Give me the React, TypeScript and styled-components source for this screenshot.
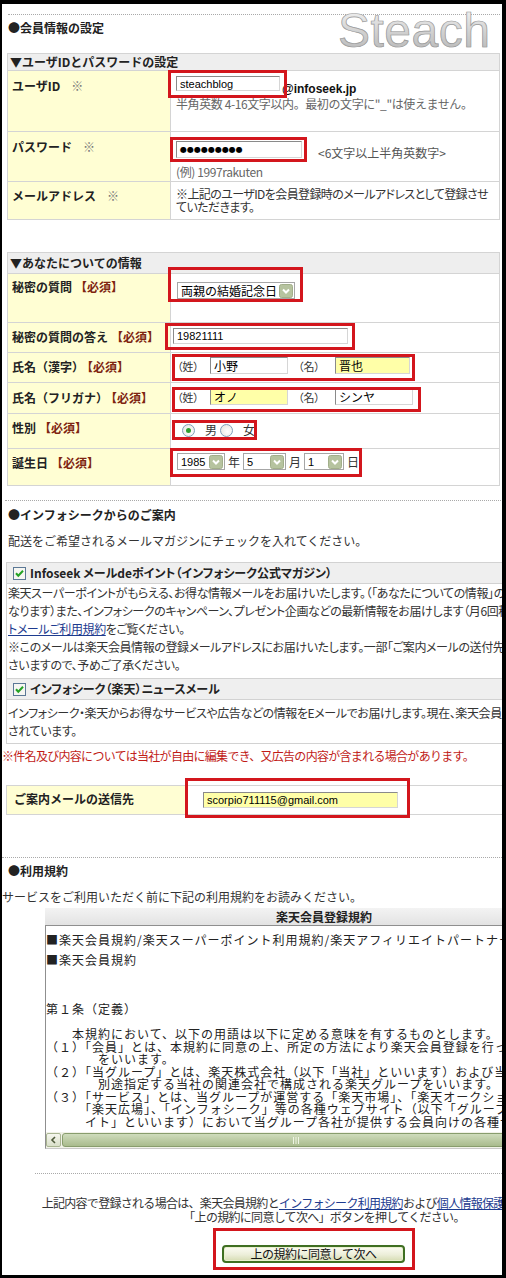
import React from "react";
import styled, { createGlobalStyle } from "styled-components";

const JP = `"Noto Sans CJK JP", "Noto Sans", sans-serif`;
const LATIN = `"Liberation Sans", "Noto Sans CJK JP", sans-serif`;

const GlobalStyle = createGlobalStyle`
  html, body { margin: 0; padding: 0; background: #000; }
  body { font-family: ${JP}; font-size: 12px; color: #333; }
  *, *::before, *::after { box-sizing: border-box; }
`;

const Frame = styled.div`
  position: relative;
  width: 506px;
  height: 1278px;
  border-style: solid;
  border-color: #000;
  border-width: 4px 4px 3px 2px;
  background: #fff;
  overflow: hidden;
`;

const Page = styled.div`
  width: 644px;
`;

const Watermark = styled.div`
  position: absolute;
  top: 3px;
  left: 336px;
  font-family: ${LATIN};
  font-size: 48px;
  line-height: 48px;
  letter-spacing: 0.5px;
  color: transparent;
  background: linear-gradient(#f4f4f4, #cfcfcf 55%, #b4b4b4);
  -webkit-background-clip: text;
  background-clip: text;
  -webkit-text-stroke: 0.7px #9b9b9b;
  pointer-events: none;
`;

const Rule = styled.div<{ $top: number; $left: number; $width: number }>`
  margin: ${(p) => p.$top}px 0 0 ${(p) => p.$left}px;
  width: ${(p) => p.$width}px;
  border-top: 1px dotted #a9a9a9;
`;

const Heading = styled.div<{ $top: number }>`
  margin: ${(p) => p.$top}px 0 0 6px;
  font-weight: bold;
  line-height: 14px;
  color: #222;
`;

const Note = styled.div<{ $top: number; $left: number }>`
  margin: ${(p) => p.$top}px 0 0 ${(p) => p.$left}px;
  line-height: 14px;
  color: #333;
  white-space: nowrap;
`;

/* form tables */
const FormTable = styled.div<{ $top: number; $left: number; $width: number }>`
  margin: ${(p) => p.$top}px 0 0 ${(p) => p.$left}px;
  width: ${(p) => p.$width}px;
  display: flex;
  flex-direction: column;
  gap: 1px;
  border: 1px solid #d4d4d4;
  background: #d4d4d4;
`;

const TableHead = styled.div<{ $h: number }>`
  height: ${(p) => p.$h}px;
  display: flex;
  align-items: center;
  padding-left: 2px;
  background: #eeeeee;
  font-weight: bold;
  line-height: 14px;
  color: #222;
`;

const Row = styled.div<{ $h: number; $label?: number }>`
  display: grid;
  grid-template-columns: ${(p) => p.$label ?? 162}px minmax(0, 1fr);
  gap: 1px;
  height: ${(p) => p.$h}px;
`;

const Label = styled.div<{ $pad: number; $left?: number }>`
  background: #fffed3;
  padding: ${(p) => p.$pad}px 0 0 ${(p) => p.$left ?? 4}px;
  font-weight: bold;
  line-height: 14px;
  color: #222;
  white-space: nowrap;
`;

const Must = styled.span`
  margin-left: 3px;
  color: #7e2410;
`;

const Mark = styled.span`
  margin-left: 11px;
  font-weight: normal;
  color: #777;
`;

const Value = styled.div<{ $pad: number; $left?: number }>`
  background: #fff;
  padding: ${(p) => p.$pad}px 0 0 ${(p) => p.$left ?? 5}px;
  line-height: 14px;
  min-width: 0;
  white-space: nowrap;
`;

const FieldLine = styled.div`
  display: flex;
  align-items: flex-start;
`;

const Marked = styled.span<{ $t: number; $r: number; $b: number; $l: number; $gap?: number }>`
  position: relative;
  display: inline-flex;
  align-items: center;
  gap: ${(p) => p.$gap ?? 0}px;
  vertical-align: top;
  &::after {
    content: "";
    position: absolute;
    top: ${(p) => -p.$t}px;
    right: ${(p) => -p.$r}px;
    bottom: ${(p) => -p.$b}px;
    left: ${(p) => -p.$l}px;
    border: 3px solid #d3161d;
    pointer-events: none;
  }
`;

const Field = styled.span<{ $w: number; $h?: number; $fill?: string; $jp?: boolean }>`
  display: inline-flex;
  align-items: center;
  flex: none;
  width: ${(p) => p.$w}px;
  height: ${(p) => p.$h ?? 16}px;
  padding: 0 3px;
  border: 1px solid;
  border-color: #8a8a8a #d6d6d6 #d6d6d6 #8a8a8a;
  background: ${(p) => p.$fill ?? "#fff"};
  font-family: ${(p) => (p.$jp ? JP : LATIN)};
  font-size: ${(p) => (p.$jp ? 12 : 11)}px;
  color: #000;
  overflow: hidden;
`;

const Dots = styled.span`
  font-family: "DejaVu Sans", sans-serif;
  font-size: 8px;
  color: #000;
`;

const Domain = styled.span`
  margin-left: 2px;
  padding-top: 6px;
  font-family: ${LATIN};
  font-weight: bold;
  font-size: 12px;
  color: #111;
`;

const Aside = styled.span`
  margin-left: 16px;
  padding-top: 5px;
  color: #555;
`;

const Hint = styled.div<{ $top: number }>`
  margin-top: ${(p) => p.$top}px;
  line-height: 14px;
  letter-spacing: -0.4px;
  color: #666;
`;

const Para = styled.div`
  line-height: 13px;
  letter-spacing: -0.6px;
  color: #333;
  font-feature-settings: "palt";
`;

const Select = styled.span<{ $w: number; $jp?: boolean }>`
  display: inline-flex;
  align-items: center;
  justify-content: space-between;
  flex: none;
  width: ${(p) => p.$w}px;
  height: 17px;
  padding: 0 1px 0 3px;
  border: 1px solid #a6a6a6;
  background: #fff;
  font-family: ${(p) => (p.$jp ? JP : LATIN)};
  font-size: ${(p) => (p.$jp ? 12 : 11)}px;
  color: #000;
`;

const Tag = styled.span<{ $w: number; $gap?: number }>`
  width: ${(p) => p.$w}px;
  margin-left: ${(p) => p.$gap ?? 0}px;
  flex: none;
  font-size: 11px;
  color: #333;
  font-feature-settings: "palt";
`;

const Unit = styled.span`
  color: #333;
`;

const Radio = styled.span<{ $on?: boolean }>`
  position: relative;
  width: 13px;
  height: 13px;
  flex: none;
  border-radius: 50%;
  border: 1px solid #7f9db9;
  background: radial-gradient(circle at 60% 60%, #ffffff, #e2e2dc);
  &::after {
    content: "";
    display: ${(p) => (p.$on ? "block" : "none")};
    position: absolute;
    top: 3px;
    left: 3px;
    width: 5px;
    height: 5px;
    border-radius: 50%;
    background: #2e9e2e;
  }
`;

const Choice = styled.span<{ $gap: number }>`
  margin: 0 ${(p) => p.$gap}px 0 10px;
  color: #333;
`;

/* magazine box */
const MagBox = styled.div`
  margin: 14px 0 0 4px;
  width: 640px;
  border: 1px solid #d2d2d2;
`;

const MagHead = styled.div`
  display: flex;
  align-items: center;
  gap: 4px;
  padding-left: 6px;
  line-height: 20px;
  background: #efefef;
  border-bottom: 1px solid #d2d2d2;
  font-weight: bold;
  font-feature-settings: "palt";
  color: #222;
  &:not(:first-child) {
    border-top: 1px solid #d2d2d2;
  }
`;

const MagText = styled.div<{ $pt: number; $pb: number }>`
  padding: ${(p) => p.$pt}px 0 ${(p) => p.$pb}px 1px;
  line-height: 18px;
  letter-spacing: -0.4px;
  color: #333;
  font-feature-settings: "palt";
  white-space: nowrap;
`;

const Link = styled.a`
  color: #1d3b8f;
  text-decoration: underline;
`;

const Warning = styled.div`
  margin-top: 3px;
  line-height: 18px;
  color: #c11b17;
  letter-spacing: -0.7px;
  white-space: nowrap;
`;

/* terms */
const Terms = styled.div`
  margin: 4px 0 0 43px;
  width: 558px;
`;

const TermsTitle = styled.div`
  height: 17px;
  line-height: 17px;
  text-align: center;
  font-weight: bold;
  color: #222;
  background: linear-gradient(#f3f3f3, #e3e3e3);
`;

const TermsBody = styled.div`
  border: 1px solid;
  border-color: #8f8f8f #c9c9c9 #c9c9c9 #8f8f8f;
  background: #fff;
`;

const TermsText = styled.div`
  padding: 7px 0 4px 0;
  letter-spacing: 1px;
  color: #222;
  white-space: pre;
  overflow: hidden;
`;

const TermsLine = styled.div<{ $top: number }>`
  margin-top: ${(p) => p.$top}px;
  line-height: 14px;
`;

const TermsPre = styled.div`
  margin-top: 36px;
  line-height: 12.5px;
`;

const HScroll = styled.div`
  display: flex;
  height: 16px;
  padding: 1px 0;
  background: #f1f2e8;
`;

const ScrollButton = styled.div`
  width: 15px;
  flex: none;
  display: flex;
  align-items: center;
  justify-content: center;
  background: linear-gradient(#f6f7ef, #d9dfc9);
  border: 1px solid #a9b592;
  border-radius: 2px;
`;

const ScrollThumb = styled.div`
  width: 468px;
  flex: none;
  margin-left: 1px;
  display: flex;
  align-items: center;
  justify-content: center;
  background: linear-gradient(#cfdcbc, #a9bb8d);
  border: 1px solid #889d6d;
  border-radius: 3px;
`;

/* bottom */
const Closing = styled.div`
  margin-top: 22px;
  line-height: 14px;
  text-align: center;
  letter-spacing: -0.7px;
  color: #333;
  white-space: nowrap;
`;

const ButtonRow = styled.div`
  margin-top: 21px;
  display: flex;
  justify-content: center;
  padding-right: 21px;
`;

const AgreeButton = styled.button`
  width: 183px;
  height: 18px;
  padding: 0;
  border: 2px solid #3f6f22;
  border-radius: 4px;
  background: linear-gradient(#fcfcf3, #eceed9 55%, #d6dcb2);
  box-shadow: inset 0 0 0 1px #e9f0cf;
  font-family: ${JP};
  font-size: 12px;
  line-height: 14px;
  color: #111;
  letter-spacing: -0.5px;
`;

const Chevron = () => (
  <svg width="14" height="14" viewBox="0 0 14 14">
    <rect x="0.5" y="0.5" width="13" height="13" rx="2" fill="#b6c39f" stroke="#a2af8a" />
    <path d="M4 5.5 L7 8.5 L10 5.5" stroke="#fff" strokeWidth="2" fill="none" />
  </svg>
);

const CheckBox = () => (
  <svg width="13" height="13" viewBox="0 0 13 13">
    <rect x="0.5" y="0.5" width="12" height="12" fill="#f6f6f2" stroke="#5b7896" />
    <path d="M3 6.3 L5.3 8.8 L10 3.8" stroke="#24a224" strokeWidth="2" fill="none" />
  </svg>
);

const Grip = () => (
  <svg width="8" height="7" viewBox="0 0 8 7">
    <path d="M1.5 0 V7 M4 0 V7 M6.5 0 V7" stroke="#eef4e2" strokeWidth="1" />
  </svg>
);

const LeftArrow = () => (
  <svg width="7" height="8" viewBox="0 0 7 8">
    <path d="M5 1 L2 4 L5 7" stroke="#4e5a3b" strokeWidth="1.6" fill="none" />
  </svg>
);

const termsPre = `第１条（定義）

　　本規約において、以下の用語は以下に定める意味を有するものとします。
（１）「会員」とは、本規約に同意の上、所定の方法により楽天会員登録を行った個人
　　　　をいいます。
（２）「当グループ」とは、楽天株式会社（以下「当社」といいます）および当社が
　　　　別途指定する当社の関連会社で構成される楽天グループをいいます。
（３）「サービス」とは、当グループが運営する「楽天市場」、「楽天オークション」、
　　　「楽天広場」、「インフォシーク」等の各種ウェブサイト（以下「グループサ
　　　イト」といいます）において当グループ各社が提供する会員向けの各種サービス`;

export default function App() {
  return (
    <>
      <GlobalStyle />
      <Frame>
        <Page>
          <Rule $top={10} $left={6} $width={492} />
          <Heading $top={6}>●会員情報の設定</Heading>

          <FormTable $top={18} $left={5} $width={493}>
            <TableHead $h={16}>▼ユーザIDとパスワードの設定</TableHead>
            <Row $h={60}>
              <Label $pad={8}>
                ユーザID<Mark>※</Mark>
              </Label>
              <Value $pad={5}>
                <FieldLine>
                  <Marked $t={6} $r={7} $b={7} $l={8}>
                    <Field $w={104} $h={15}>steachblog</Field>
                  </Marked>
                  <Domain>@infoseek.jp</Domain>
                </FieldLine>
                <Hint $top={1}>半角英数 4-16文字以内。最初の文字に"_"は使えません。</Hint>
              </Value>
            </Row>
            <Row $h={49}>
              <Label $pad={8}>
                パスワード<Mark>※</Mark>
              </Label>
              <Value $pad={9}>
                <FieldLine>
                  <Marked $t={4} $r={5} $b={4} $l={6}>
                    <Field $w={126} $h={17}>
                      <Dots>●●●●●●●●●</Dots>
                    </Field>
                  </Marked>
                  <Aside>&lt;6文字以上半角英数字&gt;</Aside>
                </FieldLine>
                <Hint $top={5}>(例) 1997rakuten</Hint>
              </Value>
            </Row>
            <Row $h={37}>
              <Label $pad={7}>
                メールアドレス<Mark>※</Mark>
              </Label>
              <Value $pad={5}>
                <Para>
                  ※上記のユーザIDを会員登録時のメールアドレスとして登録させ
                  <br />
                  ていただきます。
                </Para>
              </Value>
            </Row>
          </FormTable>

          <FormTable $top={32} $left={5} $width={493}>
            <TableHead $h={20}>▼あなたについての情報</TableHead>
            <Row $h={48}>
              <Label $pad={6}>
                秘密の質問<Must>【必須】</Must>
              </Label>
              <Value $pad={8} $left={6}>
                <Marked $t={15} $r={8} $b={3} $l={9}>
                  <Select $w={118} $jp>
                    両親の結婚記念日
                    <Chevron />
                  </Select>
                </Marked>
              </Value>
            </Row>
            <Row $h={29}>
              <Label $pad={7}>
                秘密の質問の答え<Must>【必須】</Must>
              </Label>
              <Value $pad={5} $left={2}>
                <Marked $t={5} $r={7} $b={6} $l={8}>
                  <Field $w={175} $h={16}>19821111</Field>
                </Marked>
              </Value>
            </Row>
            <Row $h={29}>
              <Label $pad={7}>
                氏名（漢字）<Must>【必須】</Must>
              </Label>
              <Value $pad={4} $left={6}>
                <Marked $t={3} $r={5} $b={7} $l={5}>
                  <Tag $w={33}>（姓）</Tag>
                  <Field $w={78} $h={17} $jp>小野</Field>
                  <Tag $w={37} $gap={10}>（名）</Tag>
                  <Field $w={75} $h={17} $jp $fill="#ffffa8">晋也</Field>
                </Marked>
              </Value>
            </Row>
            <Row $h={30}>
              <Label $pad={8}>
                氏名（フリガナ）<Must>【必須】</Must>
              </Label>
              <Value $pad={5} $left={6}>
                <Marked $t={1} $r={8} $b={7} $l={5}>
                  <Tag $w={33}>（姓）</Tag>
                  <Field $w={78} $h={17} $jp $fill="#ffffa8">オノ</Field>
                  <Tag $w={37} $gap={10}>（名）</Tag>
                  <Field $w={78} $h={17} $jp>シンヤ</Field>
                </Marked>
              </Value>
            </Row>
            <Row $h={34}>
              <Label $pad={7}>
                性別<Must>【必須】</Must>
              </Label>
              <Value $pad={9} $left={11}>
                <Marked $t={3} $r={2} $b={3} $l={10}>
                  <Radio $on />
                  <Choice $gap={3}>男</Choice>
                  <Radio />
                  <Choice $gap={0}>女</Choice>
                </Marked>
              </Value>
            </Row>
            <Row $h={36}>
              <Label $pad={7}>
                誕生日<Must>【必須】</Must>
              </Label>
              <Value $pad={4} $left={6}>
                <Marked $t={5} $r={3} $b={7} $l={7} $gap={3}>
                  <Select $w={48}>
                    1985
                    <Chevron />
                  </Select>
                  <Unit>年</Unit>
                  <Select $w={43}>
                    5
                    <Chevron />
                  </Select>
                  <Unit>月</Unit>
                  <Select $w={40}>
                    1
                    <Chevron />
                  </Select>
                  <Unit>日</Unit>
                </Marked>
              </Value>
            </Row>
          </FormTable>

          <Rule $top={14} $left={3} $width={640} />
          <Heading $top={7}>●インフォシークからのご案内</Heading>
          <Note $top={12} $left={6}>
            配送をご希望されるメールマガジンにチェックを入れてください。
          </Note>

          <MagBox>
            <MagHead>
              <CheckBox />
              Infoseek メールdeポイント（インフォシーク公式マガジン）
            </MagHead>
            <MagText $pt={0} $pb={4}>
              <div>
                楽天スーパーポイントがもらえる、お得な情報メールをお届けいたします。（「あなたについての情報」の登録内容によって配信内容が異
              </div>
              <div>
                なります）また、インフォシークのキャンペーン、プレゼント企画などの最新情報をお届けします（月6回程度）。詳しくは、メールdeポイン
              </div>
              <div>
                <Link>トメールご利用規約</Link>をご覧ください。
              </div>
              <div>
                ※このメールは楽天会員情報の登録メールアドレスにお届けいたします。一部「ご案内メールの送付先」に届かないメールもご
              </div>
              <div>さいますので、予めご了承ください。</div>
            </MagText>
            <MagHead>
              <CheckBox />
              インフォシーク（楽天）ニュースメール
            </MagHead>
            <MagText $pt={4} $pb={3}>
              <div>
                インフォシーク・楽天からお得なサービスや広告などの情報をEメールでお届けします。現在、楽天会員の方は自動的に登録
              </div>
              <div>されています。</div>
            </MagText>
          </MagBox>

          <Warning>※件名及び内容については当社が自由に編集でき、又広告の内容が含まれる場合があります。</Warning>

          <FormTable $top={20} $left={4} $width={640}>
            <Row $h={28} $label={178}>
              <Label $pad={6} $left={7}>
                ご案内メールの送信先
              </Label>
              <Value $pad={6} $left={17}>
                <Marked $t={14} $r={12} $b={10} $l={18}>
                  <Field $w={195} $h={16} $fill="#ffffa8">scorpio711115@gmail.com</Field>
                </Marked>
              </Value>
            </Row>
          </FormTable>

          <Rule $top={42} $left={0} $width={644} />
          <Heading $top={6}>●利用規約</Heading>
          <Note $top={12} $left={0}>
            サービスをご利用いただく前に下記の利用規約をお読みください。
          </Note>

          <Terms>
            <TermsTitle>楽天会員登録規約</TermsTitle>
            <TermsBody>
              <TermsText>
                <TermsLine $top={0}>■楽天会員規約/楽天スーパーポイント利用規約/楽天アフィリエイトパートナー規約</TermsLine>
                <TermsLine $top={6}>■楽天会員規約</TermsLine>
                <TermsPre>{termsPre}</TermsPre>
              </TermsText>
              <HScroll>
                <ScrollButton>
                  <LeftArrow />
                </ScrollButton>
                <ScrollThumb>
                  <Grip />
                </ScrollThumb>
              </HScroll>
            </TermsBody>
          </Terms>

          <Rule $top={24} $left={33} $width={611} />
          <Closing>
            上記内容で登録される場合は、楽天会員規約と<Link>インフォシーク利用規約</Link>および
            <Link>個人情報保護方針</Link>に同意のうえ、
            <br />
            「上の規約に同意して次へ」ボタンを押してください。
          </Closing>
          <ButtonRow>
            <Marked $t={17} $r={10} $b={7} $l={9}>
              <AgreeButton type="button">上の規約に同意して次へ</AgreeButton>
            </Marked>
          </ButtonRow>
        </Page>
        <Watermark>Steach</Watermark>
      </Frame>
    </>
  );
}
